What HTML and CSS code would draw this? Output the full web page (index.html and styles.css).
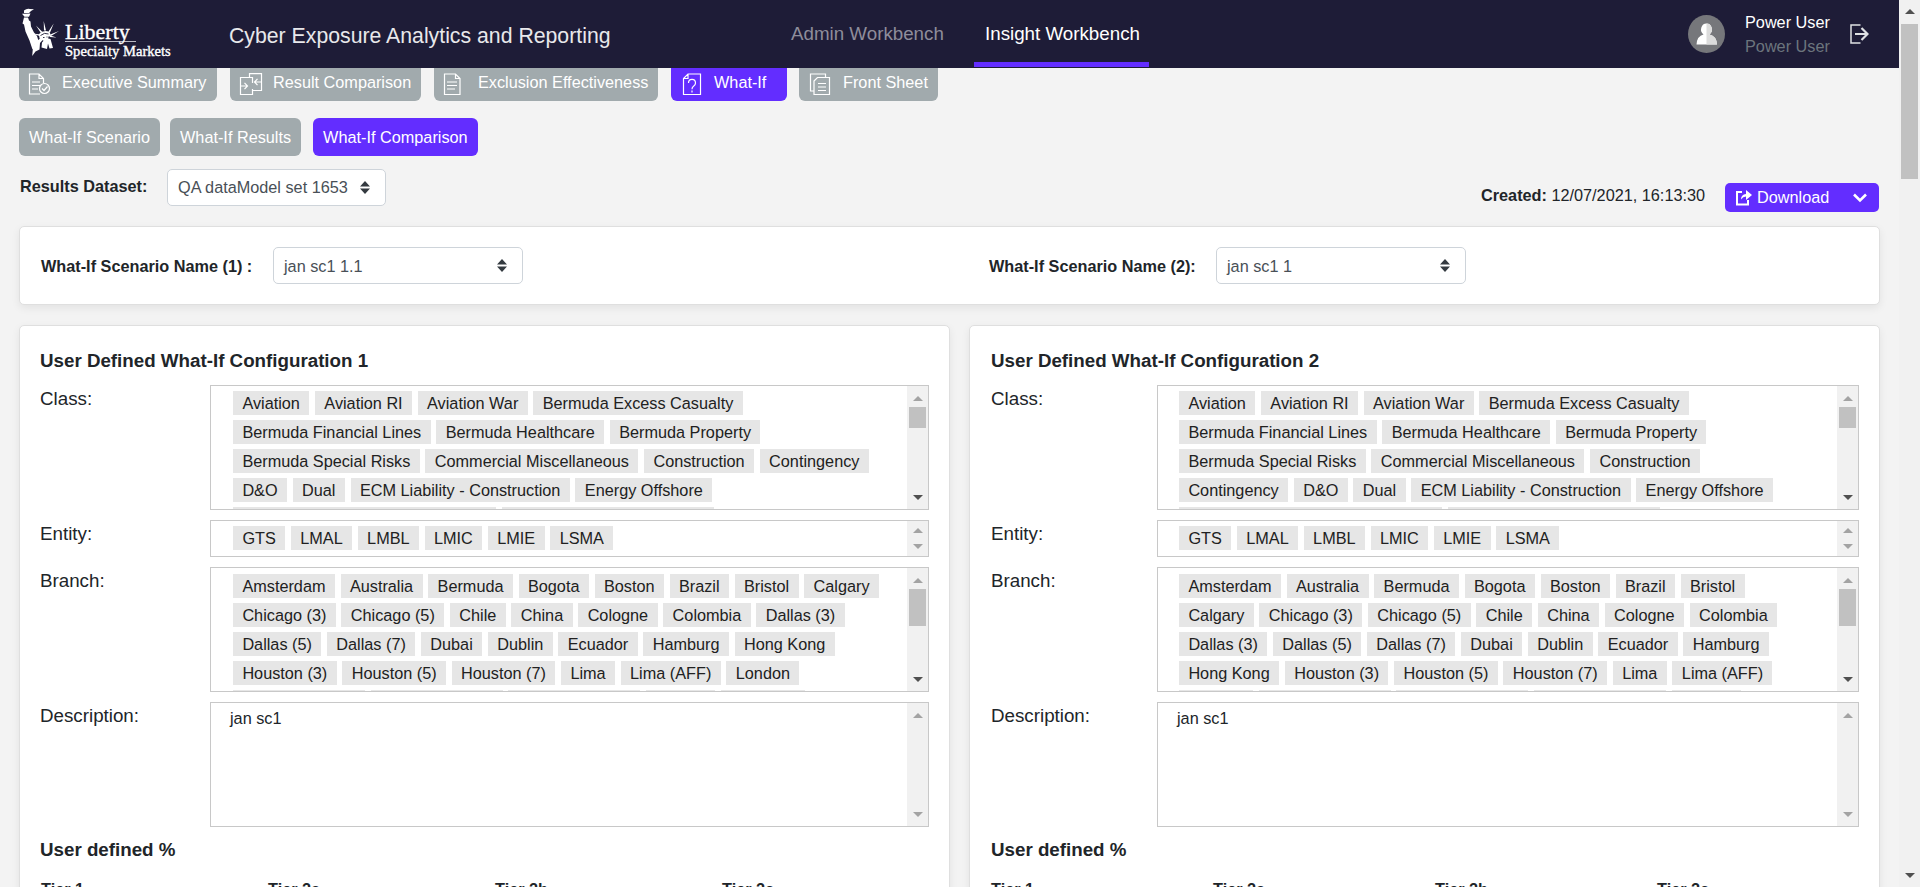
FILE: index.html
```html
<!DOCTYPE html>
<html lang="en">
<head>
<meta charset="utf-8">
<title>Cyber Exposure Analytics and Reporting</title>
<link rel="stylesheet" href="styles.css">
</head>
<body>
<div class="viewport">
<div class="app">
  <header class="header">
    <div class="logo">
      <svg class="statue" width="40" height="52" viewBox="0 0 40 52" fill="#fff">
        <path d="M3 2.500q3-2.500 6-1.500l4 .3-3 1.700-2 2H3zM1 5.800l8.500-.3-1.500 3.200H3.500zM3 9.500h4l1 3 1.500 1 .5 5 3 6 3 3.500 1.500 5-3 2.500-2 4-1 2-3-9-4-9-1.500-7-1.500-1z"/>
        <path d="M11.200 48l.8-9 3-5.500 5-3.500 3 .5-4 4.500-.5 6.500-4 2zM20.500 39.500l.5-5 4-4.500 4.500 1 2.500 9-3.500.5-1.500-5-1 5.500z"/>
        <path d="M22.700 13l2.300 9.500h-2zM32.700 15.500L29 24.500l-1.700-.8zM38 23l-8 5-.8-1.500zM15 17.500l6.500 6.500-1.500 1.200zM11.500 25.500l8.500 1v2zM35.500 29.500l-7-.5.3-1.700z"/>
        <path d="M18 26q5-5 10.500-2l1.500 3.500-2.500 1-.5 3-4 1.500-4.500-2.500z"/>
        <path d="M19.500 27.500q4-3.500 8-1.500M22 29.500h1.500M25.500 29l1 0" fill="none" stroke="#1e1c37" stroke-width=".9"/>
      </svg>
      <div class="wordmark"><span class="word-a">Liberty</span><span class="word-b">Specialty Markets</span></div>
    </div>
    <div class="title">Cyber Exposure Analytics and Reporting</div>
    <nav class="nav"><a class="nav-item">Admin Workbench</a><a class="nav-item on">Insight Workbench</a></nav>
    <div class="account">
      <svg width="37" height="38" viewBox="0 0 37 38"><ellipse cx="18.500" cy="19" rx="18.500" ry="19" fill="#76777b"/><path d="M18.500 8.500a5.500 6 0 0 1 3 11q7 1.500 7.500 10H8.500q.5-8.500 7-10a5.500 6 0 0 1 3-11z" fill="#fff"/><path d="M18.500 8.500a5.500 6 0 0 1 3 11q7 1.500 7.500 10H18.500z" fill="#dcdcdc"/></svg>
      <div class="names"><span>Power User</span><span class="role">Power User</span></div>
      <svg class="logout" width="19" height="20" viewBox="0 0 19 20" fill="none" stroke="#dfe1e4" stroke-width="1.500"><path d="M10.500 1H1v18h9.500"/><path d="M5 10h12M11.500 4l6 6-6 6" stroke-width="2.200"/></svg>
    </div>
  </header>

  <div class="tabs">
    <a class="tab t1"><svg width="24" height="24" viewBox="0 0 24 24" class="ico"><path d="M12 21H1.500V1h9.500l4.500 4.500v4.500M11 1v4.500h4.500M4 9h8M4 12.500h8M4 16h6"/><circle cx="16.500" cy="15.500" r="5"/><path d="M14 15.500l2 2 3.500-4"/></svg>Executive Summary</a>
    <a class="tab t2"><svg width="24" height="24" viewBox="0 0 24 24" class="ico"><path d="M10.500 4.500H1.500v17h12v-4M13.500 10V4.500h-3V.7h12v16.800h-9V16M2 13h6M5.500 9.800L8.500 13l-3 3.200M22 9h-6M18.500 5.800L15.500 9l3 3.200"/></svg>Result Comparison</a>
    <a class="tab t3"><svg width="24" height="24" viewBox="0 0 24 24" class="ico"><path d="M1.500 1h11L17 5.500V21.500H1.500zM12.500 1v4.500H17M4 9h10M4 12.500h10M4 16h8"/></svg>Exclusion Effectiveness</a>
    <a class="tab t4 on"><svg width="24" height="24" viewBox="0 0 24 24" class="ico"><path d="M6 1h12.500v20.500H1.500V5.500zM6 1v4.500H1.500M6.500 10q0-3.700 3.500-3.700t3.500 3.700q0 2-2 3.200-1.500 1-1.500 3M10 17.500v2"/></svg>What-If</a>
    <a class="tab t5"><svg width="24" height="24" viewBox="0 0 24 24" class="ico"><path d="M5 18H1.500V1h15v3.500M5 8L8.500 4.500H20.500v17H5zM9 10.500h8M9 14h8M9 17.500h8"/></svg>Front Sheet</a>
  </div>

  <div class="subtabs">
    <a class="sub">What-If Scenario</a><a class="sub">What-If Results</a><a class="sub on">What-If Comparison</a>
  </div>

  <div class="toolbar">
    <label class="bold">Results Dataset:</label>
    <div class="select s-data">QA dataModel set 1653<svg class="caret" width="10" height="13" viewBox="0 0 10 13"><path d="M0 5.500L5 0l5 5.500zM0 7.500L5 13l5-5.500z" fill="#343a40"/></svg></div>
    <div class="created"><b>Created:</b> 12/07/2021, 16:13:30</div>
    <div class="download">
      <svg width="16" height="17" viewBox="0 0 16 17" fill="none" stroke="#fff" stroke-width="2"><path d="M6 3H1v12.500h11V11"/><path d="M5 10.500q0-5 5-5.500V1l6 5-6 5V7.500q-3 0-5 3z" fill="#fff" stroke="none"/></svg>
      <span>Download</span>
      <svg class="chev" width="14" height="10" viewBox="0 0 14 10" fill="none" stroke="#fff" stroke-width="2.600"><path d="M1 1.500l6 6 6-6"/></svg>
    </div>
  </div>

  <section class="card scenarios">
    <div class="scenario first"><label class="bold">What-If Scenario Name (1) :</label><div class="select s-name">jan sc1 1.1<svg class="caret" width="10" height="13" viewBox="0 0 10 13"><path d="M0 5.500L5 0l5 5.500zM0 7.500L5 13l5-5.500z" fill="#343a40"/></svg></div></div>
    <div class="scenario"><label class="bold">What-If Scenario Name (2):</label><div class="select s-name">jan sc1 1<svg class="caret" width="10" height="13" viewBox="0 0 10 13"><path d="M0 5.500L5 0l5 5.500zM0 7.500L5 13l5-5.500z" fill="#343a40"/></svg></div></div>
  </section>

  <div class="panels">
    <section class="card panel p1">
      <h2>User Defined What-If Configuration 1</h2>
      <div class="field"><label>Class:</label>
        <div class="box tall"><div class="chips">
          <span>Aviation</span><span>Aviation RI</span><span>Aviation War</span><span>Bermuda Excess Casualty</span><span>Bermuda Financial Lines</span><span>Bermuda Healthcare</span><span>Bermuda Property</span><span>Bermuda Special Risks</span><span>Commercial Miscellaneous</span><span>Construction</span><span>Contingency</span><span>D&amp;O</span><span>Dual</span><span>ECM Liability - Construction</span><span>Energy Offshore</span><span class="w263"></span><span class="w212"></span>
        </div><div class="bar"><i class="up"></i><i class="thumb"></i><i class="down dark"></i></div></div></div>
      <div class="field"><label>Entity:</label>
        <div class="box short"><div class="chips">
          <span>GTS</span><span>LMAL</span><span>LMBL</span><span>LMIC</span><span>LMIE</span><span>LSMA</span>
        </div><div class="bar tight"><i class="up"></i><i class="down"></i></div></div></div>
      <div class="field"><label>Branch:</label>
        <div class="box tall"><div class="chips low">
          <span>Amsterdam</span><span>Australia</span><span>Bermuda</span><span>Bogota</span><span>Boston</span><span>Brazil</span><span>Bristol</span><span>Calgary</span><span>Chicago (3)</span><span>Chicago (5)</span><span>Chile</span><span>China</span><span>Cologne</span><span>Colombia</span><span>Dallas (3)</span><span>Dallas (5)</span><span>Dallas (7)</span><span>Dubai</span><span>Dublin</span><span>Ecuador</span><span>Hamburg</span><span>Hong Kong</span><span>Houston (3)</span><span>Houston (5)</span><span>Houston (7)</span><span>Lima</span><span>Lima (AFF)</span><span>London</span><span class="w132"></span><span class="w132"></span><span class="w132"></span><span class="w69"></span><span class="w84"></span>
        </div><div class="bar"><i class="up"></i><i class="thumb long"></i><i class="down dark"></i></div></div></div>
      <div class="field"><label>Description:</label>
        <div class="box tall"><div class="desc">jan sc1</div><div class="bar"><i class="up"></i><i class="down"></i></div></div></div>
      <h2 class="pct">User defined %</h2>
      <div class="tiers"><b>Tier 1</b><b>Tier 2a</b><b>Tier 2b</b><b>Tier 2c</b></div>
    </section>
    <section class="card panel p2">
      <h2>User Defined What-If Configuration 2</h2>
      <div class="field"><label>Class:</label>
        <div class="box tall"><div class="chips">
          <span>Aviation</span><span>Aviation RI</span><span>Aviation War</span><span>Bermuda Excess Casualty</span><span>Bermuda Financial Lines</span><span>Bermuda Healthcare</span><span>Bermuda Property</span><span>Bermuda Special Risks</span><span>Commercial Miscellaneous</span><span>Construction</span><span>Contingency</span><span>D&amp;O</span><span>Dual</span><span>ECM Liability - Construction</span><span>Energy Offshore</span><span class="w263"></span><span class="w212"></span>
        </div><div class="bar"><i class="up"></i><i class="thumb"></i><i class="down dark"></i></div></div></div>
      <div class="field"><label>Entity:</label>
        <div class="box short"><div class="chips">
          <span>GTS</span><span>LMAL</span><span>LMBL</span><span>LMIC</span><span>LMIE</span><span>LSMA</span>
        </div><div class="bar tight"><i class="up"></i><i class="down"></i></div></div></div>
      <div class="field"><label>Branch:</label>
        <div class="box tall"><div class="chips low">
          <span>Amsterdam</span><span>Australia</span><span>Bermuda</span><span>Bogota</span><span>Boston</span><span>Brazil</span><span>Bristol</span><span>Calgary</span><span>Chicago (3)</span><span>Chicago (5)</span><span>Chile</span><span>China</span><span>Cologne</span><span>Colombia</span><span>Dallas (3)</span><span>Dallas (5)</span><span>Dallas (7)</span><span>Dubai</span><span>Dublin</span><span>Ecuador</span><span>Hamburg</span><span>Hong Kong</span><span>Houston (3)</span><span>Houston (5)</span><span>Houston (7)</span><span>Lima</span><span>Lima (AFF)</span><span class="w74"></span><span class="w132"></span><span class="w132"></span><span class="w132"></span><span class="w69"></span>
        </div><div class="bar"><i class="up"></i><i class="thumb long"></i><i class="down dark"></i></div></div></div>
      <div class="field"><label>Description:</label>
        <div class="box tall"><div class="desc">jan sc1</div><div class="bar"><i class="up"></i><i class="down"></i></div></div></div>
      <h2 class="pct">User defined %</h2>
      <div class="tiers"><b>Tier 1</b><b>Tier 2a</b><b>Tier 2b</b><b>Tier 2c</b></div>
    </section>
  </div>
</div>
<div class="page-bar"><i class="up dark"></i><i class="thumb"></i><i class="down dark"></i></div>
</div>
</body>
</html>
```

FILE: styles.css
```css
* { box-sizing: border-box; }
body { margin: 0; background: #f3f3f3; color: #212529; font: 16.25px/24px "Liberation Sans", Arial, sans-serif; }
.viewport { display: flex; height: 887px; overflow: hidden; }
.app { width: 1899px; height: 887px; overflow: hidden; flex: none; }

.header { position: relative; z-index: 2; display: flex; height: 68px; background: #1e1c37; color: #fff; }
.logo { display: flex; width: 229px; padding: 8px 0 0 21px; }
.wordmark { display: flex; flex-direction: column; padding: 10px 0 0 4px; font-family: "Liberation Serif", serif; white-space: nowrap; -webkit-text-stroke: .35px #fff; }
.word-a { width: 71px; height: 24px; border-bottom: 1px solid #b9b9c4; font-size: 22px; line-height: 27px; }
.word-b { font-size: 14.600px; line-height: 19px; }
.title { width: 745px; font-size: 21.250px; line-height: 72px; color: #e8e8eb; }
.nav { display: flex; margin-left: -200px; height: 67px; }
.nav-item { width: 183px; margin-right: 17px; font-size: 18.750px; line-height: 67px; padding: 0 0 0 17px; color: #8e8d9b; white-space: nowrap; }
.nav-item.on { width: 175px; margin-right: 0; padding: 0 0 0 11px; color: #fff; border-bottom: 5px solid #632dff; }
.account { display: flex; margin-left: auto; padding: 15px 30px 0 0; }
.names { display: flex; flex-direction: column; width: 104px; margin: -5px 0 0 20px; }
.role { color: #6c757d; }
.names span { line-height: 24px; }
.logout { margin: 9px 0 0 1px; }

.tabs { display: flex; height: 33px; margin: 0 0 17px 19px; }
.tab { display: flex; gap: 10px; padding: 2px 0 0 9px; height: 33px; border-radius: 0 0 6px 6px; background: #a1aaad; color: #fff; line-height: 24px; white-space: nowrap; }
.ico { margin-top: 3px; fill: none; stroke: #fff; stroke-width: 1.200; flex: none; }
.t1 { width: 198px; margin-right: 13px; }
.t2 { width: 191px; margin-right: 13px; }
.t3 { width: 224px; margin-right: 13px; gap: 11px; }
.t4 { width: 116px; margin-right: 12px; padding-left: 11px; gap: 8px; }
.t5 { width: 139px; padding-left: 10px; }
.tab.on, .sub.on { background: #632dff; }

.subtabs { display: flex; height: 38px; margin-left: 19px; }
.sub { padding: 0 10px; border-radius: 6px; background: #a1aaad; color: #fff; line-height: 38px; white-space: nowrap; margin-right: 10px; }
.sub.on { margin-left: 2px; }

.toolbar { display: flex; height: 70px; padding: 13px 20px 0 20px; }
.bold { font-weight: bold; white-space: nowrap; }
.toolbar .bold { width: 147px; line-height: 35px; }
.select { display: flex; align-items: center; justify-content: space-between; height: 37px; padding: 0 15px 0 10px; background: #fff; border: 1px solid #ced4da; border-radius: 5px; color: #495057; white-space: nowrap; }
.s-data { width: 219px; line-height: 34px; }
.s-data { padding-bottom: 1px; }
.s-name { width: 250px; }
.created { margin-left: auto; padding-top: 14px; width: 244px; white-space: nowrap; }
.download { display: flex; align-items: center; width: 154px; height: 29px; margin-top: 14px; padding: 0 12px 0 11px; border-radius: 5px; background: #632dff; color: #fff; gap: 5px; }
.download span { padding-bottom: 1px; }
.chev { margin-left: auto; }

.card { background: #fff; border: 1px solid #dfdfdf; border-radius: 5px; box-shadow: 0 3px 8px rgba(0,0,0,.07); }
.scenarios { display: flex; width: 1861px; height: 79px; margin-left: 19px; padding: 20px 0 0 21px; }
.scenario { display: flex; }
.scenario .bold { width: 227px; line-height: 38px; }
.scenario.first { width: 948px; }
.scenario.first .bold { width: 232px; }

.panels { display: flex; gap: 19px; margin: 20px 0 0 19px; }
.panel { height: 620px; padding: 24px 20px 0 20px; }
.p1 { width: 931px; }
.p2 { width: 911px; padding-left: 21px; }
h2 { margin: 0; height: 35px; font-size: 18.750px; line-height: 22px; font-weight: bold; white-space: nowrap; }
.field { display: flex; margin-bottom: 10px; }
.field label { width: 170px; font-size: 18.750px; line-height: 28px; flex: none; }
.p2 .field label { width: 166px; }
.box { display: flex; flex: 1; border: 1px solid #c8c8c8; overflow: hidden; }
.tall { height: 125px; }
.short { height: 37px; }
.chips { display: flex; flex: 1; flex-wrap: wrap; align-content: flex-start; gap: 5px 5.700px; padding: 5px 25px 0 22px; color: #212121; }
.p2 .chips { padding-left: 21px; }
.chips.low, .p2 .chips.low { padding-top: 6px; }
.chips span { height: 24px; padding: 0 9.375px; background: #e6e6e6; line-height: 25px; white-space: nowrap; }
.chips .w263 { width: 263px; }
.chips .w212 { width: 212px; }
.chips .w132 { width: 132px; }
.chips .w84 { width: 84px; }
.chips .w74 { width: 74px; }
.chips .w69 { width: 69px; }
.desc { flex: 1; padding: 3px 19px; }
.bar { display: flex; flex-direction: column; align-items: center; width: 21px; background: #f1f1f1; padding: 10px 0 9px; }
.tight { padding: 7px 0; }
.up { width: 0; height: 0; border: 5px solid transparent; border-top: 0; border-bottom-color: #a3a3a3; }
.down { width: 0; height: 0; margin-top: auto; border: 5px solid transparent; border-bottom: 0; border-top-color: #a3a3a3; }
.up.dark { border-bottom-color: #505050; }
.down.dark { border-top-color: #505050; }
.thumb { width: 17px; height: 21px; margin-top: 6px; background: #c1c1c1; }
.thumb.long { height: 37px; }
.pct { height: 43px; padding-top: 2px; }
.tiers { display: grid; grid-template-columns: repeat(4, 227px); padding-left: 1px; line-height: 19px; }
.p2 .tiers { grid-template-columns: repeat(4, 222px); padding-left: 0; }

.page-bar { display: flex; flex-direction: column; align-items: center; width: 21px; background: #f1f1f1; padding: 9px 0; }
.page-bar .thumb { height: 155px; margin-top: 10px; }
```
